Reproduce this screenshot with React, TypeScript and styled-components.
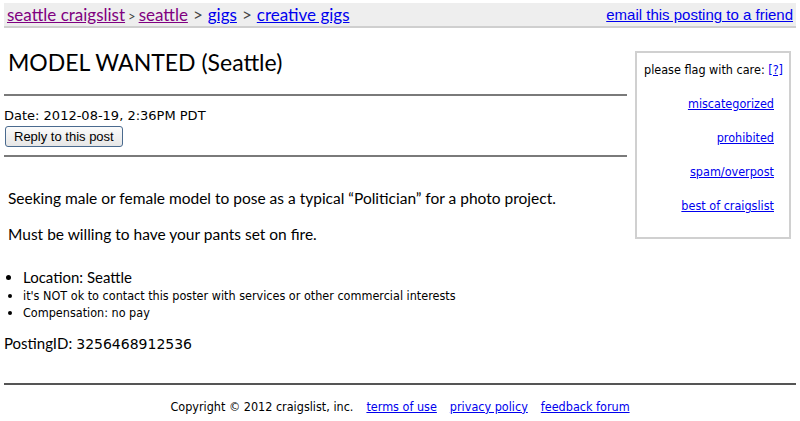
import React from "react";
import styled, { createGlobalStyle } from "styled-components";

const GlobalStyle = createGlobalStyle`
  html, body { margin: 0; padding: 0; background: #fff; }
  body { font-family: "DejaVu Sans", Verdana, sans-serif; color: #000; }
`;

const Page = styled.div`
  padding: 3px 4px 0 4px;
  width: 792px;
`;

const TopBar = styled.div`
  display: flex;
  justify-content: space-between;
  align-items: center;
  height: 23px;
  background: #eeeeee;
  border-bottom: 2px solid #cfcfcf;
  padding: 0 3px;
`;

const Crumbs = styled.div`
  font-family: "Lato", "Noto Sans", sans-serif;
  font-size: 17px;
  color: #333;
`;

const Link = styled.a<{ $visited?: boolean }>`
  color: ${(p) => (p.$visited ? "#800080" : "#0000ee")};
  text-decoration: underline;
  cursor: pointer;
`;

const Sep = styled.span<{ $small?: boolean }>`
  font-size: ${(p) => (p.$small ? "13px" : "17px")};
  color: #444;
  margin: 0 ${(p) => (p.$small ? 3 : 5)}px;
`;

const EmailLink = styled(Link)`
  font-family: "Liberation Sans", Arial, sans-serif;
  font-size: 15px;
`;

const Main = styled.div`
  display: flex;
  align-items: flex-start;
  gap: 8px;
`;

const Left = styled.div`
  width: 623px;
`;

const Title = styled.h2`
  font-family: "Lato", "Noto Sans", sans-serif;
  font-weight: 400;
  font-size: 23px;
  margin: 19px 0 0 4px;
  line-height: 30px;
`;

const Rule = styled.hr<{ $mt: number }>`
  border: 0;
  border-top: 2px solid #7a7a7a;
  margin: ${(p) => p.$mt}px 0 0 0;
  height: 0;
`;

const DateLine = styled.div`
  font-size: 13px;
  margin-top: 12px;
  line-height: 16px;
`;

const ReplyButton = styled.button`
  font-family: "Liberation Sans", Arial, sans-serif;
  font-size: 13px;
  height: 21px;
  padding: 0 8px;
  margin: 2px 0 0 1px;
  background: linear-gradient(#fbfbfb, #e6e6e6);
  border: 1px solid #4a6a8e;
  border-radius: 3px;
  color: #000;
`;

const Body = styled.div`
  font-family: "Lato", "Noto Sans", sans-serif;
  font-size: 15.5px;
  margin: 32px 0 0 4px;
`;

const Para = styled.p`
  margin: 0 0 17px 0;
  line-height: 19px;
`;

const List = styled.ul`
  margin: 25px 0 0 0;
  padding: 0 0 0 19px;
  list-style: disc;
`;

const Item = styled.li<{ $big?: boolean }>`
  font-family: ${(p) =>
    p.$big ? `"Lato", "Noto Sans", sans-serif` : `"DejaVu Sans Condensed", "DejaVu Sans", sans-serif`};
  font-size: ${(p) => (p.$big ? "15px" : "12.5px")};
  line-height: 17.5px;
`;

const Posting = styled.div`
  margin-top: 12px;
  font-size: 15px;
  font-family: "Lato", "Noto Sans", sans-serif;
`;

const PostingNum = styled.span`
  font-family: "DejaVu Sans", sans-serif;
  font-size: 14px;
  margin-left: 4px;
`;

const FlagBox = styled.div`
  width: 140px;
  margin-top: 23px;
  border: 2px solid #d0d0d0;
  padding: 9px 6px 24px 6px;
  text-align: right;
  font-family: "DejaVu Sans Condensed", "DejaVu Sans", sans-serif;
  font-size: 12.5px;
  display: flex;
  flex-direction: column;
  align-items: flex-end;
  gap: 19px;
`;

const FlagHead = styled.div`
  line-height: 15px;
  white-space: nowrap;
`;

const FlagLink = styled(Link)`
  line-height: 15px;
  margin-right: 9px;
`;

const Footer = styled.div`
  margin-top: 31px;
  border-top: 2px solid #555;
  padding-top: 14px;
  text-align: center;
  font-family: "DejaVu Sans Condensed", "DejaVu Sans", sans-serif;
  font-size: 12.5px;
  display: flex;
  justify-content: center;
  gap: 13px;
`;

export default function App() {
  return (
    <>
      <GlobalStyle />
      <Page>
        <TopBar>
          <Crumbs>
            <Link $visited>seattle craigslist</Link>
            <Sep $small>&gt;</Sep>
            <Link $visited>seattle</Link>
            <Sep>&gt;</Sep>
            <Link>gigs</Link>
            <Sep>&gt;</Sep>
            <Link>creative gigs</Link>
          </Crumbs>
          <EmailLink>email this posting to a friend</EmailLink>
        </TopBar>
        <Main>
          <Left>
            <Title>MODEL WANTED (Seattle)</Title>
            <Rule $mt={17} />
            <DateLine>Date: 2012-08-19, 2:36PM PDT</DateLine>
            <ReplyButton>Reply to this post</ReplyButton>
            <Rule $mt={8} />
            <Body>
              <Para>Seeking male or female model to pose as a typical “Politician” for a photo project.</Para>
              <Para>Must be willing to have your pants set on fire.</Para>
            </Body>
            <List>
              <Item $big>Location: Seattle</Item>
              <Item>it's NOT ok to contact this poster with services or other commercial interests</Item>
              <Item>Compensation: no pay</Item>
            </List>
            <Posting>
              PostingID:<PostingNum>3256468912536</PostingNum>
            </Posting>
          </Left>
          <FlagBox>
            <FlagHead>
              please flag with care: <Link>[?]</Link>
            </FlagHead>
            <FlagLink>miscategorized</FlagLink>
            <FlagLink>prohibited</FlagLink>
            <FlagLink>spam/overpost</FlagLink>
            <FlagLink>best of craigslist</FlagLink>
          </FlagBox>
        </Main>
        <Footer>
          <span>Copyright © 2012 craigslist, inc.</span>
          <Link>terms of use</Link>
          <Link>privacy policy</Link>
          <Link>feedback forum</Link>
        </Footer>
      </Page>
    </>
  );
}
